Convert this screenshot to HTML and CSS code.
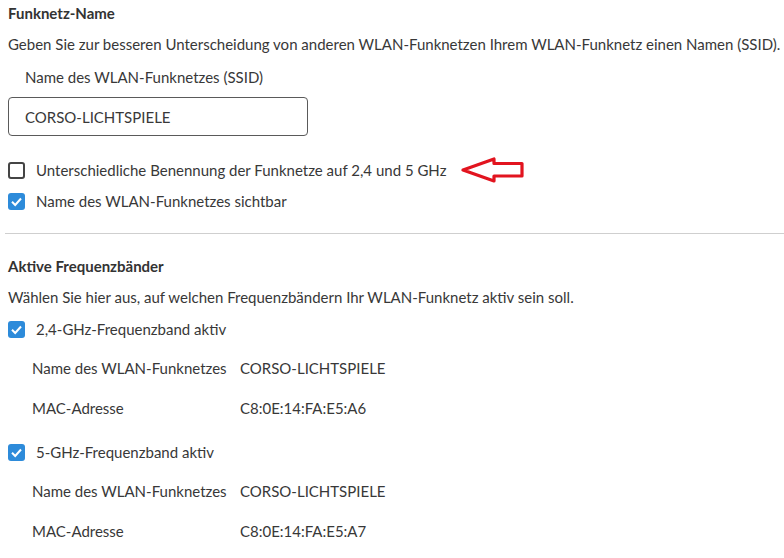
FILE: index.html
```html
<!DOCTYPE html>
<html>
  <head>
    <title>WLAN Funknetz</title>
    <link rel="stylesheet" href="styles.css">
  </head>
  <body>
    <h2 class="section-title">Funknetz-Name</h2>
    <p class="section-text">Geben Sie zur besseren Unterscheidung von anderen WLAN-Funknetzen Ihrem WLAN-Funknetz einen Namen (SSID).</p>
    <label class="field-label" for="ssid">Name des WLAN-Funknetzes (SSID)</label>
    <input class="field-input" type="text" id="ssid" value="CORSO-LICHTSPIELE">
    <div class="check-row first">
      <span class="box"></span>
      <span>Unterschiedliche Benennung der Funknetze auf 2,4 und 5 GHz</span>
      <svg class="arrow" width="66" height="26" viewBox="0 0 66 26">
        <path d="M3 13 L34 2 L34 6.5 L62 6.5 L62 19 L34 19 L34 24 Z" fill="none" stroke="#e2141f" stroke-width="3.2" stroke-linejoin="round"/>
      </svg>
    </div>
    <div class="check-row">
      <span class="box checked"><svg width="17" height="17" viewBox="0 0 17 17"><path d="M4 8.8 L7.2 12 L13 5.5" fill="none" stroke="#fff" stroke-width="2"/></svg></span>
      <span>Name des WLAN-Funknetzes sichtbar</span>
    </div>
    <hr class="divider">
    <h2 class="section-title second">Aktive Frequenzbänder</h2>
    <p class="section-text">Wählen Sie hier aus, auf welchen Frequenzbändern Ihr WLAN-Funknetz aktiv sein soll.</p>
    <div class="check-row band">
      <span class="box checked"><svg width="17" height="17" viewBox="0 0 17 17"><path d="M4 8.8 L7.2 12 L13 5.5" fill="none" stroke="#fff" stroke-width="2"/></svg></span>
      <span>2,4-GHz-Frequenzband aktiv</span>
    </div>
    <div class="info-row">
      <span>Name des WLAN-Funknetzes</span>
      <span>CORSO-LICHTSPIELE</span>
    </div>
    <div class="info-row">
      <span>MAC-Adresse</span>
      <span>C8:0E:14:FA:E5:A6</span>
    </div>
    <div class="check-row band2">
      <span class="box checked"><svg width="17" height="17" viewBox="0 0 17 17"><path d="M4 8.8 L7.2 12 L13 5.5" fill="none" stroke="#fff" stroke-width="2"/></svg></span>
      <span>5-GHz-Frequenzband aktiv</span>
    </div>
    <div class="info-row">
      <span>Name des WLAN-Funknetzes</span>
      <span>CORSO-LICHTSPIELE</span>
    </div>
    <div class="info-row">
      <span>MAC-Adresse</span>
      <span>C8:0E:14:FA:E5:A7</span>
    </div>
  </body>
</html>
```

FILE: styles.css
```css
body {
  margin: 0;
  padding: 3px 0 0 8px;
  font-family: Lato, "Open Sans", sans-serif;
  font-size: 15px;
  line-height: 20px;
  color: #383838;
  background-color: #fff;
}
.section-title {
  margin: 0;
  font-size: 15px;
  font-weight: bold;
  line-height: 20px;
  color: #333;
}
.section-title.second {
  margin-top: 22px;
}
.section-text {
  margin: 11px 0 0 0;
}
.field-label {
  display: block;
  margin: 13px 0 0 17px;
}
.field-input {
  display: block;
  box-sizing: border-box;
  width: 300px;
  height: 39px;
  margin-top: 10px;
  padding: 0 16px;
  border: 1px solid #5a5a5a;
  border-radius: 4px;
  font-family: inherit;
  font-size: 15px;
  color: #383838;
}
.check-row {
  display: flex;
  align-items: center;
  gap: 11px;
  height: 20px;
  margin-top: 11px;
}
.check-row.first {
  margin-top: 24px;
}
.check-row.band {
  margin-top: 12px;
}
.check-row.band2 {
  margin-top: 24px;
}
.box {
  box-sizing: border-box;
  width: 17px;
  height: 17px;
  border: 2px solid #444;
  border-radius: 3px;
  flex-shrink: 0;
}
.box.checked {
  border: none;
  background-color: #2d8bda;
}
.box svg {
  display: block;
}
.arrow {
  margin-left: 3px;
}
.divider {
  margin: 22px 0 0 -3px;
  border: none;
  border-top: 1px solid #cfcfcf;
}
.info-row {
  display: grid;
  grid-template-columns: 208px auto;
  margin: 19px 0 0 24px;
}
.info-row + .info-row {
  margin-top: 20px;
}
```
